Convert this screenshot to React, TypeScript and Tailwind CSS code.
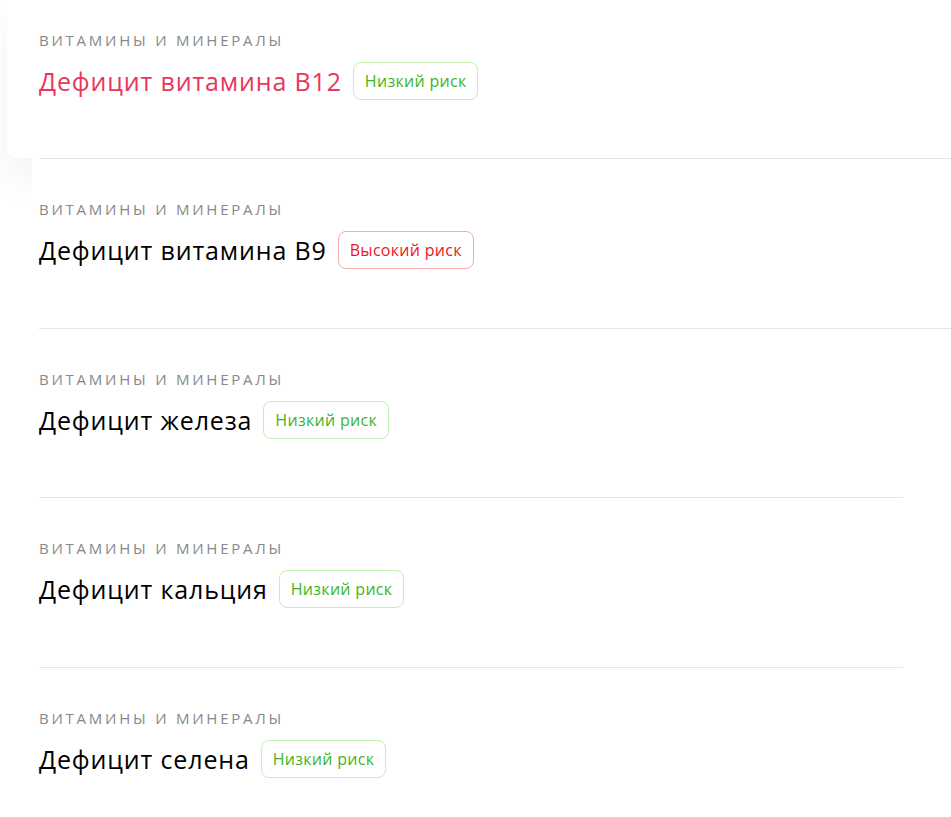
const items = [
  { title: "Дефицит витамина B12", risk: "low", active: true, wide: true },
  { title: "Дефицит витамина B9", risk: "high", active: false, wide: true },
  { title: "Дефицит железа", risk: "low", active: false, wide: true },
  { title: "Дефицит кальция", risk: "low", active: false, wide: false },
  { title: "Дефицит селена", risk: "low", active: false, wide: false },
]

function RiskBadge({ risk }: { risk: string }) {
  if (risk === "high") {
    return (
      <span className="inline-flex h-[38px] items-center rounded-[8px] border border-[#f7a9ab] px-[11px] text-[16px] tracking-[0.3px] text-[#f0141e]">
        Высокий риск
      </span>
    )
  }
  return (
    <span className="inline-flex h-[38px] items-center rounded-[8px] border border-[#c4f0b4] px-[11px] text-[16px] tracking-[0.3px] text-[#3fb51f]">
      Низкий риск
    </span>
  )
}

function Category() {
  return <div className="text-[15px] leading-5 tracking-[2.75px] text-[#888888]">ВИТАМИНЫ И МИНЕРАЛЫ</div>
}

export default function App() {
  return (
    <div className="min-h-[817px] overflow-hidden bg-white font-['Open_Sans',_'Noto_Sans',sans-serif]">
      {items.map((item, i) =>
        item.active ? (
          <div
            key={i}
            className="relative ml-[7px] rounded-bl-[8px] bg-white pb-[58px] pl-[32px] pt-[30px] shadow-[0_20px_40px_rgba(0,0,0,0.05)]"
          >
            <Category />
            <div className="mt-[12px] flex items-center gap-[11px]">
              <span className="text-[25px] leading-[38px] tracking-[0.85px] text-[#e8375a]">{item.title}</span>
              <RiskBadge risk={item.risk} />
            </div>
          </div>
        ) : (
          <div key={i} className="relative ml-[32px] bg-white pl-[7px]">
            <div className={item.wide ? "border-t border-[#e5e5e5]" : "mr-[48px] border-t border-[#e5e5e5]"}>
              <div className="pb-[58.5px] pt-[40px]">
                <Category />
                <div className="mt-[12px] flex items-center gap-[11px]">
                  <span className="text-[25px] leading-[38px] tracking-[0.85px] text-black">{item.title}</span>
                  <RiskBadge risk={item.risk} />
                </div>
              </div>
            </div>
          </div>
        )
      )}
    </div>
  )
}
